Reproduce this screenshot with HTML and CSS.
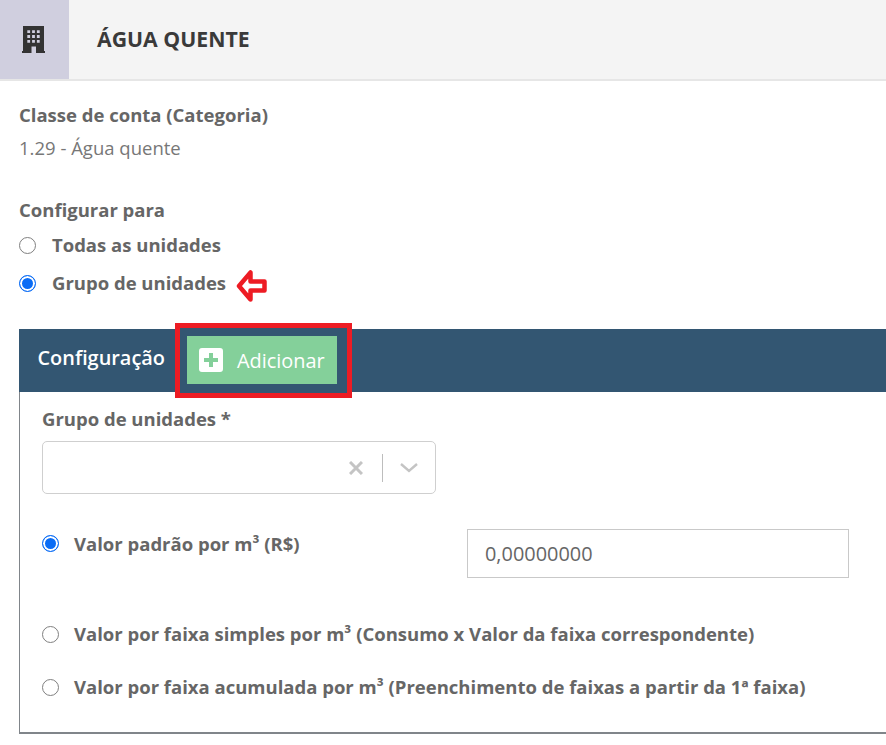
FILE: index.html
```html
<!DOCTYPE html>
<html lang="pt-BR">
<head>
<meta charset="utf-8">
<title>Água quente</title>
<link rel="stylesheet" href="styles.css">
</head>
<body>
<header class="topbar">
  <div class="topbar-icon">
    <svg width="23" height="27" viewBox="0 0 23 27"><path fill="#333" fill-rule="evenodd" d="M1 0h21v25h1v2H0v-2h1zM5.300 4.300v2.800h2.800V4.300zm4.800 0v2.800h2.800V4.300zm4.800 0v2.800h2.800V4.300zM5.300 9.100v2.800h2.800V9.100zm4.800 0v2.800h2.800V9.100zm4.800 0v2.800h2.800V9.100zM5.300 13.900v2.800h2.800v-2.800zm4.800 0v2.800h2.800v-2.800zm4.800 0v2.800h2.800v-2.800zM9.500 20.500V27h4.500v-6.500z"/></svg>
  </div>
  <h1 class="topbar-title">ÁGUA QUENTE</h1>
</header>
<main class="content">
  <section class="info">
    <div class="label">Classe de conta (Categoria)</div>
    <div class="value">1.29 - Água quente</div>
  </section>
  <section class="scope">
    <div class="label">Configurar para</div>
    <div class="radio-row scope-first"><span class="radio"></span><span class="label">Todas as unidades</span></div>
    <div class="radio-row scope-second">
      <span class="radio checked"></span><span class="label">Grupo de unidades</span>
      <svg class="arrow" width="31" height="34" viewBox="0 0 31 34"><path fill="none" stroke="#ed1c24" stroke-width="4.500" stroke-linejoin="round" d="M3 17 14.500 3.500v9h14v9h-14v9z"/></svg>
    </div>
  </section>
  <section class="panel">
    <div class="panel-head">
      <span class="panel-title">Configuração</span>
      <div class="highlight">
        <button class="add-btn" type="button">
          <svg width="24" height="24" viewBox="0 0 24 24"><path fill="#fff" fill-rule="evenodd" d="M3 0h18a3 3 0 0 1 3 3v18a3 3 0 0 1-3 3H3a3 3 0 0 1-3-3V3a3 3 0 0 1 3-3zm7 5v5H5v4h5v5h4v-5h5v-4h-5V5z"/></svg>
          <span>Adicionar</span>
        </button>
      </div>
    </div>
    <div class="panel-body">
      <div class="label">Grupo de unidades *</div>
      <div class="select">
        <svg width="14" height="14" viewBox="0 0 14 14"><path stroke="#c4c4c4" stroke-width="3" d="m1 1 12 12M13 1 1 13"/></svg>
        <span class="select-sep"></span>
        <svg width="18" height="10" viewBox="0 0 18 10"><path fill="none" stroke="#c4c4c4" stroke-width="2.4" d="m1 1 8 7 8-7"/></svg>
      </div>
      <div class="value-row">
        <div class="radio-row"><span class="radio checked"></span><span class="label">Valor padrão por m³ (R$)</span></div>
        <div class="text-input">0,00000000</div>
      </div>
      <div class="radio-row range-first"><span class="radio"></span><span class="label">Valor por faixa simples por m³ (Consumo x Valor da faixa correspondente)</span></div>
      <div class="radio-row range-second"><span class="radio"></span><span class="label">Valor por faixa acumulada por m³ (Preenchimento de faixas a partir da 1ª faixa)</span></div>
    </div>
  </section>
</main>
</body>
</html>
```
FILE: styles.css
```css
* { box-sizing: border-box; }
html, body { margin: 0; padding: 0; }
body {
  width: 886px;
  height: 745px;
  overflow: hidden;
  background: #fff;
  font-family: "Open Sans", "Noto Sans", sans-serif;
  color: #666;
}
.topbar {
  display: flex;
  align-items: center;
  height: 81px;
  background: #f4f4f4;
  border-bottom: 2px solid #e6e6e6;
}
.topbar-icon {
  display: flex;
  align-items: center;
  justify-content: flex-start;
  width: 69px;
  height: 79px;
  padding-left: 22px;
  background: #d0cfdf;
}
.topbar-title {
  margin: 0 0 2px 28px;
  font-size: 21.25px;
  font-weight: 700;
  color: #3a3a3a;
}
.content { padding-left: 19px; }
.info { padding-top: 22px; }
.label { font-size: 18.5px; font-weight: 700; color: #666; line-height: 24px; white-space: nowrap; }
.value { margin-top: 9px; font-size: 18.5px; line-height: 24px; color: #777; }
.scope { margin-top: 38px; }
.radio-row { display: flex; align-items: center; position: relative; }
.scope-first { margin-top: 11px; }
.scope-second { margin-top: 14px; }
.radio {
  flex: none;
  width: 17px;
  height: 17px;
  margin-right: 16px;
  border: 1.5px solid #808080;
  border-radius: 50%;
  background: #fff;
}
.radio.checked {
  border: 1.5px solid #0a6cf5;
  background: #0a6cf5;
  box-shadow: inset 0 0 0 2px #fff;
}
.panel-body .radio { margin-right: 15px; }
.arrow { flex: none; margin: -2px 0 -8px 10px; }
.panel {
  margin-top: 34px;
  height: 405px;
  border: 2px solid #80858a;
  border-top: 0;
  border-right: 0;
  border-left-width: 1.5px;
}
.panel-head {
  display: flex;
  align-items: center;
  height: 63px;
  margin-left: -1.5px;
  background: #335672;
}
.panel-title {
  margin: 0 0 6px 19px;
  font-size: 19.9px;
  font-weight: 600;
  color: #fff;
}
.highlight {
  flex: none;
  margin-left: 10px;
  padding: 8px 10px 9px 7px;
  border: 5px solid #ed1c24;
  background: #335672;
}
.add-btn {
  display: flex;
  align-items: center;
  width: 150px;
  height: 48px;
  padding: 0 0 0 12px;
  border: 0;
  background: #84d09a;
  color: #fff;
  font: 400 19.9px "Open Sans", "Noto Sans", sans-serif;
}
.add-btn span { margin-left: 14px; }
.panel-body { padding: 15px 0 0 22px; }
.select {
  display: flex;
  align-items: center;
  justify-content: flex-end;
  width: 394px;
  height: 53px;
  margin-top: 10px;
  padding-right: 17px;
  border: 1px solid #cfcfcf;
  border-radius: 5px;
}
.select-sep { width: 1.5px; height: 28px; margin: 0 17px 0 19px; background: #bdbdbd; }
.value-row { display: flex; align-items: flex-start; margin-top: 35px; }
.value-row .radio-row { width: 425px; height: 29px; }
.text-input {
  width: 382px;
  height: 49px;
  padding: 11px 0 0 17px;
  border: 1px solid #c9c9c9;
  font-size: 19.9px;
  line-height: 26px;
  color: #666;
}
.range-first { margin-top: 44px; }
.range-second { margin-top: 29px; }
```
